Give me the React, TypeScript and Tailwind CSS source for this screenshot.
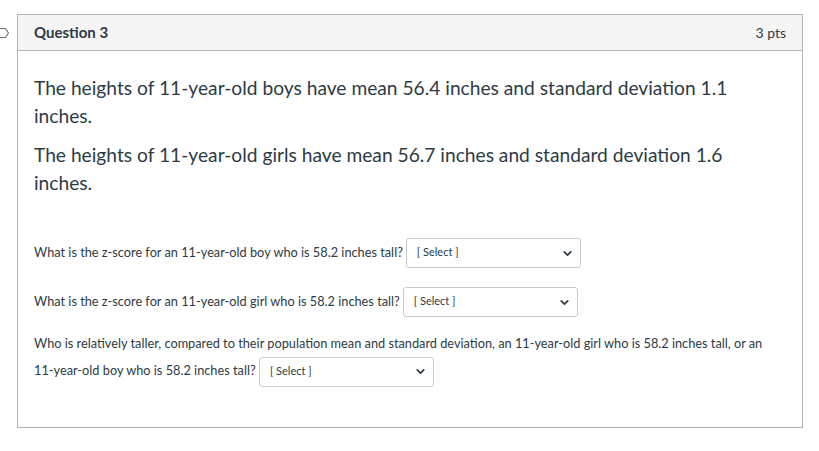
import React from 'react';
import { ChevronDown } from 'lucide-react';

function SelectBox({ inline = false }: { inline?: boolean }) {
  return (
    <span
      className={`inline-flex h-[30px] w-[175px] items-center justify-between rounded-[3px] border border-[#c7cdd1] bg-white pl-[10px] pr-[6px] align-middle text-[11px] text-[#2d3b45] ${inline ? '-my-[2px]' : ''}`}
    >
      <span className="-mt-[2px]">[ Select ]</span>
      <ChevronDown size={13} strokeWidth={3.2} className="text-[#2d3b45]" />
    </span>
  );
}

export default function App() {
  return (
    <div
      className="min-h-[451px] w-[819px] bg-white pt-[14px] text-[#2d3b45]"
      style={{ fontFamily: 'Lato, "Noto Sans", sans-serif' }}
    >
      <div className="flex">
        {/* partial flag icon cut off at the left edge */}
        <div className="relative w-[17px] shrink-0">
          <svg width="12" height="12" viewBox="0 0 12 12" className="absolute left-[-2px] top-[13px]">
            <path d="M0.5 1.5 H7.5 L10.5 6 L7.5 10.5 H0.5" fill="none" stroke="#6b7780" strokeWidth="1.2" strokeLinejoin="round" />
          </svg>
        </div>

        <div className="w-[786px] border border-[#b0b4b7]">
          {/* Header */}
          <div className="flex h-[36px] items-center justify-between border-b border-[#b0b4b7] bg-[#f5f5f5] px-4">
            <span className="text-[15px] font-bold">Question 3</span>
            <span className="text-[14px]">3 pts</span>
          </div>

          {/* Body */}
          <div className="px-4 pt-[23px] pb-[42px]">
            <p className="pr-[50px] text-[19.2px] leading-[28px]">
              The heights of 11-year-old boys have mean 56.4 inches and standard deviation 1.1 inches.
            </p>
            <p className="mt-[11px] pr-[50px] text-[19.2px] leading-[28px]">
              The heights of 11-year-old girls have mean 56.7 inches and standard deviation 1.6 inches.
            </p>

            <div className="mt-[41px] flex items-center text-[12.75px]">
              <span className="mr-[3px]">What is the z-score for an 11-year-old boy who is 58.2 inches tall?</span>
              <SelectBox />
            </div>

            <div className="mt-[19px] flex items-center text-[12.75px]">
              <span className="mr-[3px]">What is the z-score for an 11-year-old girl who is 58.2 inches tall?</span>
              <SelectBox />
            </div>

            <p className="mt-[13px] pr-[10px] text-[12.75px] leading-[27px]">
              Who is relatively taller, compared to their population mean and standard deviation, an 11-year-old girl who is 58.2 inches tall, or an 11-year-old boy who is 58.2 inches tall?{' '}
              <SelectBox inline />
            </p>
          </div>
        </div>
      </div>
    </div>
  );
}
